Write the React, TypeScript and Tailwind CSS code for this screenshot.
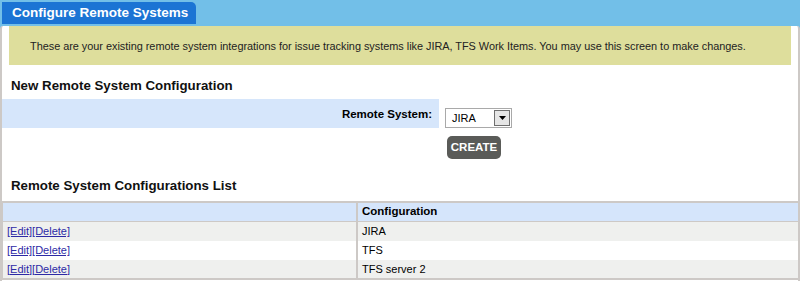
const rows = ["JIRA", "TFS", "TFS server 2"];

const SelectBox = () => (
  <div className="w-[67px] h-[20px] border border-[#a9a9a9] bg-white flex items-center justify-between pl-[6px] pr-[1px]">
    <span className="text-[11px] text-black leading-none">JIRA</span>
    <div className="w-[16px] h-[16px] border border-[#6f6f6f] bg-[#e6e6e6] flex items-center justify-center">
      <svg width="7" height="4" viewBox="0 0 7 4">
        <path d="M0 0h7L3.5 4z" fill="#000" />
      </svg>
    </div>
  </div>
);

export default function App() {
  return (
    <div className="w-[800px] h-[281px] overflow-hidden bg-[#72bfe8] font-['Liberation_Sans',Arial,sans-serif] text-black">
      <div className="h-[26px] flex items-start pt-[2px] pl-[2px]">
        <div className="h-[22px] w-[194px] bg-[#1b74d4] rounded-tr-[5px] flex items-center pl-[10px] text-white font-bold text-[13.5px]">
          Configure Remote Systems
        </div>
      </div>
      <div className="h-[255px] bg-white border-l-2 border-r-2 border-[#cdc9c6] rounded-t-[3px] flex flex-col">
        <div className="mx-[7px] h-[39px] bg-[#dede9c] flex items-center pl-[21px] pt-[1px] text-[10.9px] tracking-[-0.02px] text-[#222]">
          These are your existing remote system integrations for issue tracking systems like JIRA, TFS Work Items. You may use this screen to make changes.
        </div>

        <div className="h-[34px] flex items-end pb-[3px] pl-[9px] font-bold text-[13.3px] text-[#111]">
          New Remote System Configuration
        </div>

        <div className="flex h-[29px]">
          <div className="w-[437px] bg-[#d6e6fb] flex items-center justify-end pr-[7px] pt-[3px] font-bold text-[11.5px]">
            Remote System:
          </div>
          <div className="pl-[6px] pt-[9px]">
            <SelectBox />
          </div>
        </div>

        <div className="pl-[445px] pt-[8px]">
          <button className="w-[54px] h-[23px] rounded-[5px] bg-[#5a5b58] text-white font-bold text-[11.5px] flex items-center justify-center">
            CREATE
          </button>
        </div>

        <div className="h-[42px] flex items-end pb-[5px] pl-[9px] font-bold text-[13.3px] text-[#111]">
          Remote System Configurations List
        </div>

        <div className="border-t-2 border-b-2 border-l border-[#cdc9c6] text-[11px]">
          <div className="flex h-[19px] bg-[#d5e5fb] border-b border-[#cdc9c6]">
            <div className="w-[355px] border-r-2 border-[#cdc9c6]" />
            <div className="flex-1 flex items-center pl-[4px] font-bold text-[11.5px]">Configuration</div>
          </div>
          {rows.map((name, i) => (
            <div
              key={name}
              className={`flex ${i === 2 ? "h-[18px]" : "h-[19px]"} ${i % 2 === 0 ? "bg-[#eff0ee]" : "bg-white"}`}
            >
              <div className="w-[355px] border-r-2 border-[#cdc9c6] flex items-center pl-[4px]">
                <a href="#" className="text-[#2d2aa6] underline">[Edit]</a>
                <a href="#" className="text-[#2d2aa6] underline">[Delete]</a>
              </div>
              <div className="flex-1 flex items-center pl-[4px]">{name}</div>
            </div>
          ))}
        </div>
      </div>
    </div>
  );
}
